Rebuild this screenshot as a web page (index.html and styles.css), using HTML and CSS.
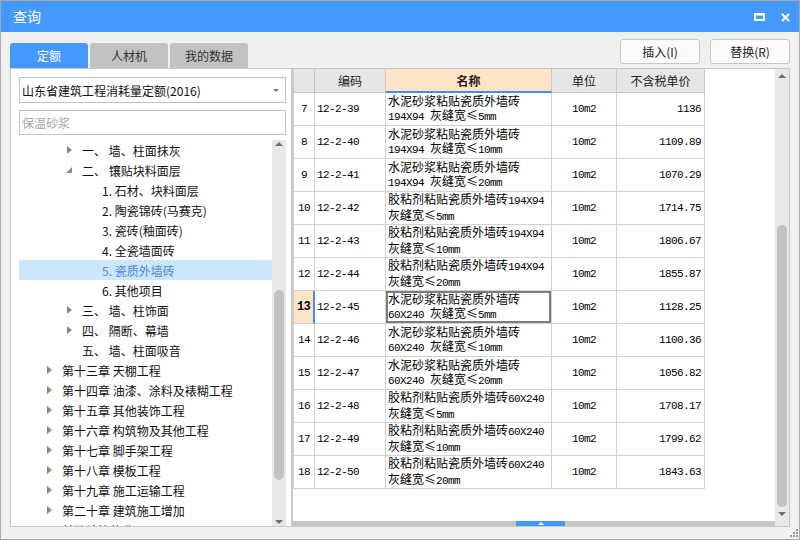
FILE: index.html
```html
<!DOCTYPE html>
<html lang="zh-CN">
<head>
<meta charset="utf-8">
<title>查询</title>
<link rel="stylesheet" href="styles.css">
</head>
<body>
<div class="window">
  <div class="titlebar">
    <span class="title">查询</span>
    <div class="tb-icons">
      <svg class="ic" width="11" height="8" viewBox="0 0 11 8"><rect x="1" y="1" width="9" height="6" fill="none" stroke="#fff" stroke-width="2"/><rect x="0" y="0" width="11" height="2.5" fill="#fff"/></svg>
      <svg class="ic" width="9" height="9" viewBox="0 0 9 9"><path d="M1 1L8 8M8 1L1 8" stroke="#fff" stroke-width="2"/></svg>
    </div>
  </div>

  <div class="toolbar">
    <div class="tabs">
      <div class="tab active">定额</div>
      <div class="tab">人材机</div>
      <div class="tab">我的数据</div>
    </div>
    <div class="actions">
      <div class="btn">插入(I)</div>
      <div class="btn">替换(R)</div>
    </div>
  </div>

  <div class="main">
    <div class="left">
      <div class="select"><span class="sel-text">山东省建筑工程消耗量定额(2016)</span><span class="dd"></span></div>
      <div class="search">保温砂浆</div>
      <div class="tree">
        <div class="rows">
          <div class="row l2"><span class="arr"></span><span>一、 墙、柱面抹灰</span></div>
          <div class="row l2"><span class="arr open"></span><span>二、 镶贴块料面层</span></div>
          <div class="row l3"><span>1. 石材、块料面层</span></div>
          <div class="row l3"><span>2. 陶瓷锦砖(马赛克)</span></div>
          <div class="row l3"><span>3. 瓷砖(釉面砖)</span></div>
          <div class="row l3"><span>4. 全瓷墙面砖</span></div>
          <div class="row l3 sel"><span>5. 瓷质外墙砖</span></div>
          <div class="row l3"><span>6. 其他项目</span></div>
          <div class="row l2"><span class="arr"></span><span>三、 墙、柱饰面</span></div>
          <div class="row l2"><span class="arr"></span><span>四、 隔断、幕墙</span></div>
          <div class="row l2 noarr"><span>五、 墙、柱面吸音</span></div>
          <div class="row l1"><span class="arr"></span><span>第十三章 天棚工程</span></div>
          <div class="row l1"><span class="arr"></span><span>第十四章 油漆、涂料及裱糊工程</span></div>
          <div class="row l1"><span class="arr"></span><span>第十五章 其他装饰工程</span></div>
          <div class="row l1"><span class="arr"></span><span>第十六章 构筑物及其他工程</span></div>
          <div class="row l1"><span class="arr"></span><span>第十七章 脚手架工程</span></div>
          <div class="row l1"><span class="arr"></span><span>第十八章 模板工程</span></div>
          <div class="row l1"><span class="arr"></span><span>第十九章 施工运输工程</span></div>
          <div class="row l1"><span class="arr"></span><span>第二十章 建筑施工增加</span></div>
          <div class="row l1 noarr"><span>单独计算的费用</span></div>
        </div>
        <div class="vscroll tree-scroll">
          <span class="up"></span>
          <span class="thumb"></span>
          <span class="down"></span>
        </div>
      </div>
    </div>

    <div class="right">
      <div class="content">
        <div class="grid-area">
          <div class="grid">
            <div class="h"></div>
            <div class="h">编码</div>
            <div class="h hsel">名称</div>
            <div class="h">单位</div>
            <div class="h">不含税单价</div>

            <div class="c num">7</div><div class="c code">12-2-39</div><div class="c name"><div>水泥砂浆粘贴瓷质外墙砖<br><span class="m">194X94 </span>灰缝宽≤<span class="m">5mm</span></div></div><div class="c unit">10m2</div><div class="c price">1136</div>
            <div class="c num">8</div><div class="c code">12-2-40</div><div class="c name"><div>水泥砂浆粘贴瓷质外墙砖<br><span class="m">194X94 </span>灰缝宽≤<span class="m">10mm</span></div></div><div class="c unit">10m2</div><div class="c price">1109.89</div>
            <div class="c num">9</div><div class="c code">12-2-41</div><div class="c name"><div>水泥砂浆粘贴瓷质外墙砖<br><span class="m">194X94 </span>灰缝宽≤<span class="m">20mm</span></div></div><div class="c unit">10m2</div><div class="c price">1070.29</div>
            <div class="c num">10</div><div class="c code">12-2-42</div><div class="c name"><div>胶粘剂粘贴瓷质外墙砖<span class="m">194X94</span><br>灰缝宽≤<span class="m">5mm</span></div></div><div class="c unit">10m2</div><div class="c price">1714.75</div>
            <div class="c num">11</div><div class="c code">12-2-43</div><div class="c name"><div>胶粘剂粘贴瓷质外墙砖<span class="m">194X94</span><br>灰缝宽≤<span class="m">10mm</span></div></div><div class="c unit">10m2</div><div class="c price">1806.67</div>
            <div class="c num">12</div><div class="c code">12-2-44</div><div class="c name"><div>胶粘剂粘贴瓷质外墙砖<span class="m">194X94</span><br>灰缝宽≤<span class="m">20mm</span></div></div><div class="c unit">10m2</div><div class="c price">1855.87</div>
            <div class="c num cur">13</div><div class="c code">12-2-45</div><div class="c name focus"><div>水泥砂浆粘贴瓷质外墙砖<br><span class="m">60X240 </span>灰缝宽≤<span class="m">5mm</span></div></div><div class="c unit">10m2</div><div class="c price">1128.25</div>
            <div class="c num">14</div><div class="c code">12-2-46</div><div class="c name"><div>水泥砂浆粘贴瓷质外墙砖<br><span class="m">60X240 </span>灰缝宽≤<span class="m">10mm</span></div></div><div class="c unit">10m2</div><div class="c price">1100.36</div>
            <div class="c num">15</div><div class="c code">12-2-47</div><div class="c name"><div>水泥砂浆粘贴瓷质外墙砖<br><span class="m">60X240 </span>灰缝宽≤<span class="m">20mm</span></div></div><div class="c unit">10m2</div><div class="c price">1056.82</div>
            <div class="c num">16</div><div class="c code">12-2-48</div><div class="c name"><div>胶粘剂粘贴瓷质外墙砖<span class="m">60X240</span><br>灰缝宽≤<span class="m">5mm</span></div></div><div class="c unit">10m2</div><div class="c price">1708.17</div>
            <div class="c num">17</div><div class="c code">12-2-49</div><div class="c name"><div>胶粘剂粘贴瓷质外墙砖<span class="m">60X240</span><br>灰缝宽≤<span class="m">10mm</span></div></div><div class="c unit">10m2</div><div class="c price">1799.62</div>
            <div class="c num">18</div><div class="c code">12-2-50</div><div class="c name"><div>胶粘剂粘贴瓷质外墙砖<span class="m">60X240</span><br>灰缝宽≤<span class="m">20mm</span></div></div><div class="c unit">10m2</div><div class="c price">1843.63</div>
          </div>
        </div>
        <div class="hbar"><span class="handle"></span></div>
      </div>
      <div class="vscroll grid-scroll">
        <span class="up"></span>
        <span class="thumb"></span>
        <span class="down"></span>
      </div>
    </div>
  </div>

  <div class="status">
    <svg width="9" height="9" viewBox="0 0 9 9" fill="#9a9a9a"><rect x="7" y="1" width="2" height="2"/><rect x="4" y="4" width="2" height="2"/><rect x="7" y="4" width="2" height="2"/><rect x="1" y="7" width="2" height="2"/><rect x="4" y="7" width="2" height="2"/><rect x="7" y="7" width="2" height="2"/></svg>
  </div>
</div>
</body>
</html>
```

FILE: styles.css
```css
* { box-sizing: border-box; }
html, body { margin: 0; padding: 0; }
body {
  font-family: "Noto Sans CJK SC", "Microsoft YaHei", sans-serif;
  font-size: 12px;
  color: #111;
  background: #f0f0f0;
}

.window {
  width: 800px;
  height: 540px;
  border: 1px solid #a8a8a8;
  background: #f0f0f0;
  display: flex;
  flex-direction: column;
  overflow: hidden;
}

/* title bar */
.titlebar {
  height: 31px;
  flex: none;
  background: #4499ff;
  color: #fff;
  display: flex;
  align-items: center;
  padding: 0 9px 0 12px;
}
.title { flex: 1; font-size: 14px; line-height: 31px; }
.tb-icons { display: flex; align-items: center; gap: 16px; padding-top: 1px; }
.ic { display: block; }

/* toolbar */
.toolbar {
  height: 36px;
  flex: none;
  display: flex;
  justify-content: space-between;
  padding: 0 9px;
}
.tabs { display: flex; align-items: flex-end; gap: 2px; }
.tab {
  width: 78px;
  height: 25px;
  line-height: 25px;
  text-align: center;
  background: #c2c2c2;
  color: #333;
  border-radius: 3px 3px 0 0;
  font-size: 12px;
}
.tab.active { background: #4499ff; color: #fff; }
.actions { display: flex; gap: 10px; padding-top: 7px; }
.btn {
  width: 80px;
  height: 25px;
  border: 1px solid #c6c6c6;
  border-radius: 3px;
  background: #fbfbfb;
  color: #222;
  display: flex;
  align-items: center;
  justify-content: center;
}

/* main area */
.main {
  height: 459px;
  flex: none;
  display: flex;
  padding: 0 9px;
}

.left {
  width: 282px;
  flex: none;
  border: 1px solid #c9c9c9;
  background: #fff;
  display: flex;
  flex-direction: column;
  padding: 8px 5px 0 8px;
}
.select {
  height: 26px;
  flex: none;
  border: 1px solid #c2c2c2;
  display: flex;
  align-items: center;
  padding: 0 6px 0 2px;
  color: #111;
}
.sel-text { flex: 1; }
.dd {
  width: 0; height: 0;
  border-left: 3px solid transparent;
  border-right: 3px solid transparent;
  border-top: 3px solid #777;
}
.search {
  height: 25px;
  flex: none;
  margin-top: 7px;
  border: 1px solid #c2c2c2;
  display: flex;
  align-items: center;
  padding-left: 2px;
  color: #a6a6a6;
}
.tree {
  flex: 1;
  min-height: 0;
  margin-top: 5px;
  display: flex;
}
.rows { flex: 1; overflow: hidden; }
.row {
  height: 20px;
  display: flex;
  align-items: center;
  white-space: pre;
  color: #111;
}
.row.l1 { padding-left: 28px; }
.row.l2 { padding-left: 48px; }
.row.l3 { padding-left: 83px; }
.row.l1.noarr { padding-left: 43px; }
.row.l2.noarr { padding-left: 63px; }
.row.sel { background: #cce6fd; color: #3f8be4; }
.arr {
  width: 15px;
  height: 20px;
  flex: none;
  display: flex;
  align-items: center;
}
.arr::before {
  content: "";
  width: 0; height: 0;
  border-left: 5px solid #8a8a8a;
  border-top: 4px solid transparent;
  border-bottom: 4px solid transparent;
}
.arr.open::before {
  border-left: 6px solid transparent;
  border-top: 0;
  border-bottom: 6px solid #8a8a8a;
  margin-left: -1px;
}

/* scrollbars */
.vscroll {
  width: 14px;
  flex: none;
  background: #e8e8e8;
  display: flex;
  flex-direction: column;
  align-items: center;
}
.vscroll .up {
  width: 0; height: 0;
  border-left: 4px solid transparent;
  border-right: 4px solid transparent;
  border-bottom: 4px solid #6e6e6e;
}
.vscroll .down {
  width: 0; height: 0;
  border-left: 4px solid transparent;
  border-right: 4px solid transparent;
  border-top: 4px solid #6e6e6e;
}
.vscroll .thumb {
  width: 10px;
  background: #c2c2c2;
  border-radius: 5px;
}
.tree-scroll { padding-top: 2px; }
.tree-scroll .thumb { margin-top: 144px; height: 190px; }
.tree-scroll .down { margin-top: 40px; }
.grid-scroll { padding-top: 5px; }
.grid-scroll .thumb { margin-top: 147px; height: 282px; }
.grid-scroll .down { margin-top: 5px; }

/* right panel */
.right {
  flex: 1;
  border: 1px solid #c9c9c9;
  background: #fff;
  display: flex;
}
.content {
  flex: 1;
  min-width: 0;
  display: flex;
  flex-direction: column;
}
.grid-area { flex: 1; min-height: 0; overflow: hidden; }
.grid {
  display: grid;
  grid-template-columns: 21px 71px 166px 65px 88px;
  grid-template-rows: 24px;
  grid-auto-rows: 33px;
  width: 412px;
  border-left: 1px solid #cfcfcf;
}
.h {
  background: #e6e6e6;
  border-right: 1px solid #c8c8c8;
  border-bottom: 1px solid #c8c8c8;
  display: flex;
  align-items: center;
  justify-content: center;
  color: #222;
}
.h.hsel {
  background: #fde4c6;
  font-weight: bold;
  border-bottom: 2px solid #3f8ef5;
}
.c {
  border-right: 1px solid #d2d2d2;
  border-bottom: 1px solid #d2d2d2;
  display: flex;
  align-items: center;
  font-family: "Liberation Mono", monospace;
  font-size: 11px;
  letter-spacing: -0.6px;
  color: #000;
  white-space: nowrap;
}
.c.num { justify-content: center; }
.c.num.cur {
  background: #fde4c6;
  font-weight: bold;
  font-size: 12px;
  border-right: 2px solid #3f8ef5;
}
.c.code { padding-left: 2px; }
.c.name {
  padding-left: 2px;
  font-family: "Noto Sans CJK SC", sans-serif;
  font-size: 12px;
  letter-spacing: 0;
  line-height: 14px;
}
.c.name.focus { box-shadow: inset 0 0 0 2px #7d7d7d; }
.m {
  font-family: "Liberation Mono", monospace;
  font-size: 11px;
  letter-spacing: -0.6px;
  line-height: 14px;
}
.c.unit { justify-content: center; }
.c.price { justify-content: flex-end; padding-right: 3px; }

.hbar {
  height: 5px;
  flex: none;
  background: #c6c6c6;
  display: flex;
  padding-left: 223px;
}
.handle {
  width: 49px;
  height: 5px;
  background: #4499ff;
  display: flex;
  justify-content: center;
  align-items: center;
}
.handle::before {
  content: "";
  width: 0; height: 0;
  border-left: 3px solid transparent;
  border-right: 3px solid transparent;
  border-bottom: 3px solid #fff;
}

/* status */
.status {
  height: 12px;
  flex: none;
  display: flex;
  justify-content: flex-end;
  padding: 1px 1px 0 0;
}
.status svg { display: block; }
```
